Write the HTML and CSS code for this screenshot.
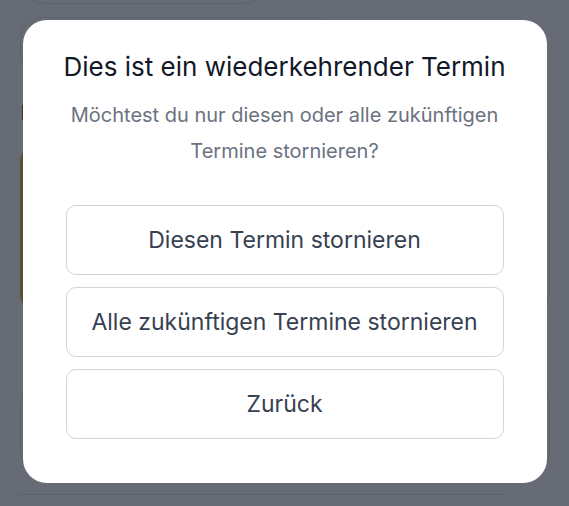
FILE: index.html
```html
<!DOCTYPE html>
<html lang="de">
<head>
<meta charset="utf-8">
<title>Termin stornieren</title>
<link rel="stylesheet" href="styles.css">
</head>
<body>
<div class="page">
  <div class="pill"></div>
  <div class="tabs"></div>
  <h2 class="section-title">Kommende Termine</h2>
  <div class="card card-highlight"></div>
  <div class="card card-plain"></div>
  <div class="divider"></div>
</div>

<div class="overlay">
  <div class="modal" role="dialog">
    <h1 class="modal-title">Dies ist ein wiederkehrender Termin</h1>
    <p class="modal-text">Möchtest du nur diesen oder alle zukünftigen Termine stornieren?</p>
    <div class="actions">
      <button class="btn">Diesen Termin stornieren</button>
      <button class="btn">Alle zukünftigen Termine stornieren</button>
      <button class="btn">Zurück</button>
    </div>
  </div>
</div>
</body>
</html>
```

FILE: styles.css
```css
* { box-sizing: border-box; }

html, body {
  margin: 0;
  padding: 0;
  height: 100%;
  overflow: hidden;
}

body {
  background: #ffffff;
  font-family: Inter, "Noto Sans", sans-serif;
}

.page {
  display: flex;
  flex-direction: column;
  padding: 0 19px 0 20px;
  margin-top: -30px;
}

.pill {
  width: 238px;
  height: 34px;
  margin-left: 5px;
  border: 1px solid #e5e7eb;
  border-radius: 17px;
}

.tabs {
  width: 320px;
  height: 60px;
  margin-top: 13px;
  border: 1px solid #e5e7eb;
  border-radius: 22px;
}

.section-title {
  margin: 24px 0 0 1px;
  font-size: 20px;
  font-weight: 700;
  color: #111827;
  line-height: 24px;
}

.card {
  border: 1px solid #e5e7eb;
  border-radius: 14px;
  background: #ffffff;
}

.card-highlight {
  margin-top: 22px;
  height: 162px;
  border-left: 4px solid #e3b93d;
  background: #fffbeb;
}

.card-plain {
  margin-top: 81px;
  height: 78px;
}

.divider {
  margin-top: 26px;
  margin-left: -2px;
  width: 488px;
  height: 1px;
  background: #e5e7eb;
}

.overlay {
  position: fixed;
  inset: 0;
  background: rgba(17, 24, 39, 0.64);
  display: flex;
  justify-content: center;
  align-items: flex-start;
  padding-top: 20px;
}

.modal {
  width: 524px;
  background: #ffffff;
  border-radius: 24px;
  padding: 31px 43px 44px;
  display: flex;
  flex-direction: column;
  align-items: center;
}

.modal-title {
  margin: 0;
  font-size: 26px;
  font-weight: 400;
  line-height: 32px;
  color: #111827;
  text-align: center;
  white-space: nowrap;
}

.modal-text {
  margin: 14px 0 0;
  font-size: 20px;
  line-height: 36px;
  color: #6b7280;
  text-align: center;
  max-width: 440px;
}

.actions {
  margin-top: 36px;
  width: 100%;
  display: flex;
  flex-direction: column;
  gap: 12px;
}

.btn {
  height: 70px;
  width: 100%;
  background: #ffffff;
  border: 1px solid #d1d5db;
  border-radius: 10px;
  font-family: inherit;
  font-size: 23px;
  font-weight: 400;
  color: #374151;
  cursor: pointer;
}
```
